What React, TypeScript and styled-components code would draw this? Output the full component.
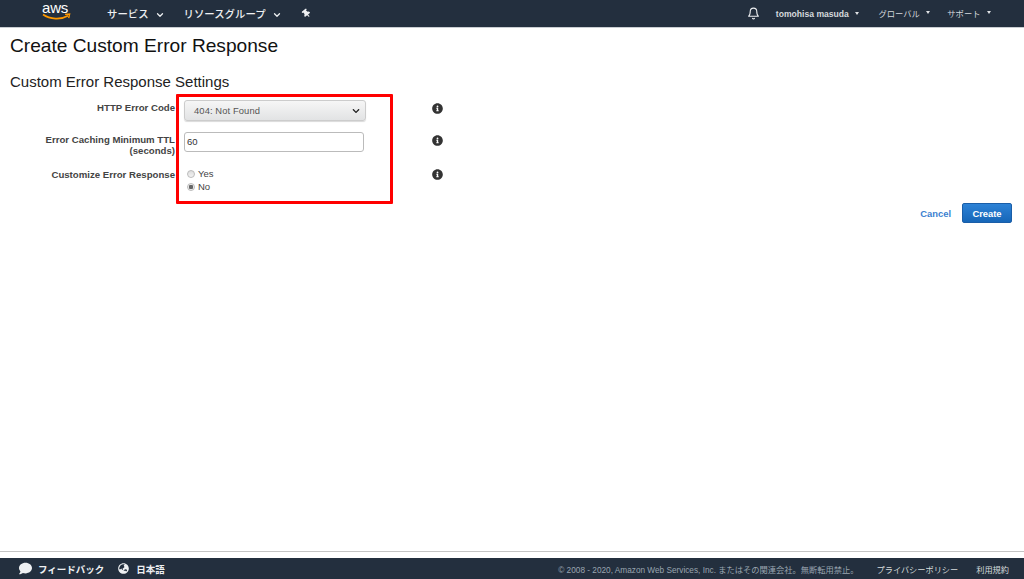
import { FC } from "react";
import styled, { createGlobalStyle } from "styled-components";
import { FaInfoCircle, FaComment, FaGlobeAsia, FaThumbtack, FaChevronDown } from "react-icons/fa";
import { FiBell, FiChevronDown } from "react-icons/fi";

const GlobalStyle = createGlobalStyle`
  html, body {
    margin: 0;
    padding: 0;
    height: 100%;
    background: #fff;
    overflow: hidden;
    font-family: "Liberation Sans", "Noto Sans CJK JP", sans-serif;
  }
  #root { height: 100%; }
`;

const App: FC = () => {
  return (
    <Page>
      <GlobalStyle />
      <TopBar>
        <LogoBox>
          <LogoText>aws</LogoText>
          <svg width="29" height="8" viewBox="0 0 29 8">
            <path d="M1 1.5C8 6.5 19 7 26 2.8" fill="none" stroke="#f90" strokeWidth="1.6" />
            <path d="M23 1.4l4.6-.4-.9 4.2" fill="none" stroke="#f90" strokeWidth="1.4" />
          </svg>
        </LogoBox>
        <MainMenu>サービス<MenuChevron /></MainMenu>
        <MainMenu>リソースグループ<MenuChevron /></MainMenu>
        <PinIcon><FaThumbtack size={9} /></PinIcon>
        <TopRight>
          <FiBell size={13} color="#eef0f2" />
          <UserMenu $left={16}>tomohisa masuda<Caret /></UserMenu>
          <UserMenu $left={19} $jp>グローバル<Caret /></UserMenu>
          <UserMenu $left={17} $jp>サポート<Caret /></UserMenu>
        </TopRight>
      </TopBar>

      <Main>
        <Title>Create Custom Error Response</Title>
        <SubTitle>Custom Error Response Settings</SubTitle>

        <FormGrid>
          <Label>HTTP Error Code</Label>
          <SelectBox>
            404: Not Found
            <FaChevronDown size={8} color="#222" />
          </SelectBox>
          <InfoCell><FaInfoCircle size={11} /></InfoCell>

          <Label>Error Caching Minimum TTL<br />(seconds)</Label>
          <TextBox defaultValue="60" />
          <InfoCell><FaInfoCircle size={11} /></InfoCell>

          <Label $top={6}>Customize Error Response</Label>
          <RadioGroup>
            <RadioRow><Radio />Yes</RadioRow>
            <RadioRow><Radio $checked />No</RadioRow>
          </RadioGroup>
          <InfoCell $top={6}><FaInfoCircle size={11} /></InfoCell>

          <Highlight />
        </FormGrid>

        <Actions>
          <CancelLink>Cancel</CancelLink>
          <CreateButton>Create</CreateButton>
        </Actions>
      </Main>

      <Footer>
        <FooterLeft>
          <FooterItem><FaComment size={13} />フィードバック</FooterItem>
          <FooterItem $gap={7}><FaGlobeAsia size={11} />日本語</FooterItem>
        </FooterLeft>
        <Copyright>© 2008 - 2020, Amazon Web Services, Inc. またはその関連会社。無断転用禁止。</Copyright>
        <FooterLink>プライバシーポリシー</FooterLink>
        <FooterLink>利用規約</FooterLink>
      </Footer>
    </Page>
  );
};

const Page = styled.div`
  display: flex;
  flex-direction: column;
  height: 100vh;
`;

const TopBar = styled.header`
  display: flex;
  align-items: center;
  height: 27px;
  flex: none;
  background: #232f3e;
  border-bottom: 1px solid #c9cdd2;
  color: #eef0f2;
  padding: 0 33px 0 42px;
`;

const LogoBox = styled.div`
  display: flex;
  flex-direction: column;
  align-items: flex-start;
  width: 65px;
  margin-top: -4px;
  svg {
    margin-top: -1px;
  }
`;

const LogoText = styled.span`
  font-size: 15px;
  line-height: 12px;
  letter-spacing: -0.2px;
  color: #fff;
`;

const MainMenu = styled.div`
  display: flex;
  align-items: center;
  font-size: 10.4px;
  font-weight: 500;
  margin-right: 19px;
  white-space: nowrap;
`;

const MenuChevron = styled(FiChevronDown).attrs({ size: 10 })`
  margin-left: 6px;
  stroke-width: 3;
  margin-top: 2px;
`;

const PinIcon = styled.span`
  display: flex;
  margin-left: 1px;
  transform: rotate(-40deg);
`;

const TopRight = styled.div`
  display: flex;
  align-items: center;
  margin-left: auto;
`;

const UserMenu = styled.div<{ $left: number; $jp?: boolean }>`
  display: flex;
  align-items: center;
  margin-left: ${(p) => p.$left}px;
  margin-top: ${(p) => (p.$jp ? -2 : 0)}px;
  font-size: ${(p) => (p.$jp ? 8.3 : 8.6)}px;
  font-weight: ${(p) => (p.$jp ? 400 : 700)};
  color: #d5d9dd;
  white-space: nowrap;
`;

const Caret = styled.i`
  width: 0;
  height: 0;
  margin-left: 6.5px;
  border-left: 2.5px solid transparent;
  border-right: 2.5px solid transparent;
  border-top: 3px solid #dfe2e5;
`;

const Main = styled.main`
  flex: 1;
  padding: 0 12px 0 10px;
`;

const Title = styled.h1`
  margin: 7px 0 0;
  font-size: 19.15px;
  line-height: 22px;
  font-weight: 400;
  color: #111;
`;

const SubTitle = styled.h2`
  margin: 16px 0 0;
  font-size: 15px;
  line-height: 18px;
  font-weight: 400;
  color: #222;
`;

const FormGrid = styled.div`
  position: relative;
  display: grid;
  grid-template-columns: 165px 182px 1fr;
  grid-template-rows: 21px 20px 26px;
  column-gap: 9px;
  row-gap: 11px;
  margin-top: 9px;
`;

const Label = styled.label<{ $top?: number }>`
  font-size: 9.65px;
  line-height: 11px;
  font-weight: 700;
  color: #444;
  text-align: right;
  padding-top: ${(p) => p.$top ?? 2}px;
`;

const SelectBox = styled.div`
  display: flex;
  align-items: center;
  justify-content: space-between;
  box-sizing: border-box;
  height: 21px;
  padding: 0 5px 0 9px;
  border: 1px solid #ccc;
  border-radius: 3px;
  background: linear-gradient(#f6f6f6, #e2e3e4);
  box-shadow: 0 1px 1px rgba(0, 0, 0, 0.15);
  font-size: 9.4px;
  letter-spacing: 0.1px;
  color: #555;
`;

const TextBox = styled.input`
  box-sizing: border-box;
  width: 180px;
  height: 20px;
  padding: 0 2px 1px;
  border: 1px solid #bbb;
  border-radius: 3px;
  outline: none;
  font-family: inherit;
  font-size: 9.5px;
  color: #333;
`;

const InfoCell = styled.span<{ $top?: number }>`
  display: flex;
  align-items: flex-start;
  padding: ${(p) => p.$top ?? 3}px 0 0 57px;
  color: #333;
`;

const RadioGroup = styled.div`
  display: flex;
  flex-direction: column;
  gap: 3px;
  padding: 6px 0 0 3px;
`;

const RadioRow = styled.div`
  display: flex;
  align-items: center;
  font-size: 9.5px;
  line-height: 10px;
  color: #444;
`;

const Radio = styled.span<{ $checked?: boolean }>`
  box-sizing: border-box;
  width: 8px;
  height: 8px;
  margin: -1px 3px 0 0;
  border-radius: 50%;
  border: 1px solid #bbb;
  background: ${(p) =>
    p.$checked ? "radial-gradient(circle, #666 0 2px, #eee 2.5px)" : "linear-gradient(#ddd, #f3f3f3)"};
`;

const Highlight = styled.div`
  position: absolute;
  left: 165.5px;
  top: -6px;
  width: 211px;
  height: 104px;
  border: 3px solid #f00;
  border-radius: 1px;
  pointer-events: none;
`;

const Actions = styled.div`
  display: flex;
  align-items: center;
  justify-content: flex-end;
  gap: 11px;
  margin-top: 14px;
`;

const CancelLink = styled.a`
  font-size: 9.4px;
  font-weight: 700;
  color: #3b7fd0;
`;

const CreateButton = styled.button`
  box-sizing: border-box;
  width: 50px;
  height: 20px;
  padding: 0;
  border: 1px solid #1a5ea8;
  border-radius: 2px;
  background: linear-gradient(#2d82d6, #1666b8);
  color: #fff;
  font-family: inherit;
  font-size: 9.4px;
  font-weight: 700;
`;

const Footer = styled.footer`
  display: flex;
  align-items: center;
  flex: none;
  height: 21px;
  background: #232f3e;
  color: #d5dbdb;
  padding: 0 15px 0 19px;
  position: relative;
  &::before {
    content: "";
    position: absolute;
    left: 0;
    right: 0;
    top: -7px;
    height: 1px;
    background: #c4c4c4;
  }
`;

const FooterLeft = styled.div`
  display: flex;
  align-items: center;
  gap: 14px;
  margin-right: auto;
`;

const FooterItem = styled.div<{ $gap?: number }>`
  display: flex;
  align-items: center;
  gap: ${(p) => p.$gap ?? 6}px;
  font-size: 9.5px;
  font-weight: 700;
  color: #eef0f2;
`;

const Copyright = styled.span`
  font-size: 8.25px;
  color: #9aa5b0;
`;

const FooterLink = styled.span`
  margin-left: 18px;
  font-size: 8.2px;
  color: #d5dbdb;
`;

export default App;
